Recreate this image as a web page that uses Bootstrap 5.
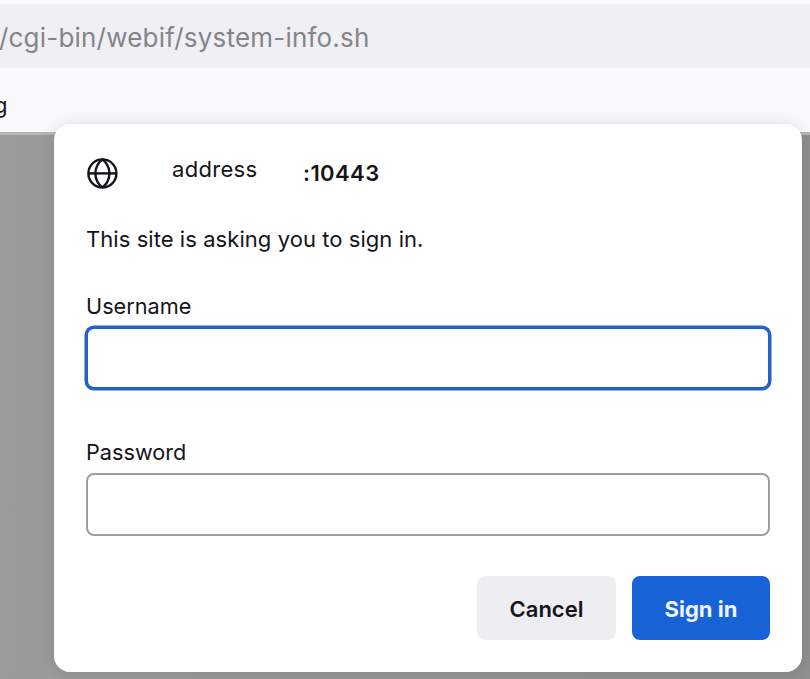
<!DOCTYPE html>
<html lang="en">
<head>
    <meta charset="UTF-8">
    <title>Sign in</title>
    <meta name="viewport" content="width=device-width, initial-scale=1">
    <link href="https://cdn.jsdelivr.net/npm/bootstrap@5.3.3/dist/css/bootstrap.min.css" rel="stylesheet">
    <style>
        html, body {
            height: 100%;
        }

        body {
            background-color: #f9f9fb;
            font-family: Inter, "Liberation Sans", sans-serif;
            color: #15141a;
            overflow: hidden;
        }

        .browser-chrome {
            height: 135px;
            padding-top: 4px;
            background: #f9f9fb;
            border-bottom: 3px solid #b5b5b7;
        }

        .url-bar {
            height: 64px;
            background: #f0f0f4;
            color: #84848c;
            font-size: 26px;
            letter-spacing: .2px;
            margin-left: -1px;
            padding-top: 3px;
        }

        .bookmark-bar {
            height: 64px;
            font-size: 22px;
            margin-left: -6px;
            padding-top: 21px;
        }

        .page-backdrop {
            height: 544px;
            background: linear-gradient(to right, #9b9b9b, #8f8f8f);
        }

        .auth-dialog {
            position: absolute;
            left: 54px;
            top: 124px;
            width: 748px;
            height: 548px;
            padding: 32px;
            background: #fff;
            border-radius: 16px;
            box-shadow: 0 0 14px rgba(0, 0, 0, .12);
        }

        .site-row {
            height: 34px;
            font-size: 22px;
        }

        .site-icon {
            width: 32px;
            height: 32px;
        }

        .site-name {
            width: 131px;
            margin-left: 54px;
            margin-top: -7px;
            letter-spacing: .3px;
        }

        .site-port {
            font-weight: 600;
            letter-spacing: .4px;
        }

        .auth-text {
            font-size: 22px;
            line-height: 28px;
            letter-spacing: .06px;
            margin: 35px 0 0;
        }

        .field-label {
            display: block;
            font-size: 21.7px;
            line-height: 28px;
            margin: 0;
        }

        .username-group {
            margin-top: 39px;
        }

        .password-group {
            margin-top: 49px;
        }

        .auth-field {
            height: 63px;
            margin-top: 7px;
            border: 2px solid #9e9e9e;
            border-radius: 8px;
            font-size: 20px;
        }

        .auth-field-active {
            height: 62px;
            border-color: #1f63c9;
            box-shadow: 0 0 0 1.5px #1f63c9;
        }

        .auth-dialog-actions {
            margin-top: 40px;
        }

        .auth-btn {
            height: 64px;
            border: 0;
            border-radius: 8px;
            padding-top: 8px;
            font-size: 22px;
            font-weight: 600;
        }

        .btn-cancel {
            width: 139px;
            background: #eeeef0;
            color: #15141a;
        }

        .btn-signin {
            width: 138px;
            background: #1763d6;
            color: #eef4ff;
            font-weight: 700;
        }

        .btn-cancel:hover {
            background: #e2e2e6;
            color: #15141a;
        }

        .btn-signin:hover {
            background: #0f55bd;
            color: #fff;
        }
    </style>
</head>
<body>

<div class="browser-chrome">
    <div class="url-bar d-flex align-items-center text-nowrap">/cgi-bin/webif/system-info.sh</div>
    <div class="bookmark-bar text-nowrap">g</div>
</div>
<div class="page-backdrop"></div>

<div class="auth-dialog">
    <div class="site-row d-flex align-items-center">
        <svg class="site-icon flex-shrink-0" viewBox="0 0 32 32" fill="none" stroke="#15141a" stroke-width="2.4">
            <circle cx="16.4" cy="16.4" r="14"/>
            <path d="M2.4 16.4h28"/>
            <path d="M16.4 2.4c-4.6 3.7-7 8.4-7 14s2.4 10.3 7 14c4.6-3.7 7-8.4 7-14s-2.4-10.3-7-14z"/>
        </svg>
        <span class="site-name">address</span>
        <span class="site-port">:10443</span>
    </div>

    <p class="auth-text">This site is asking you to sign in.</p>

    <form>
        <div class="username-group">
            <label class="field-label" for="username">Username</label>
            <input type="text" class="form-control auth-field auth-field-active" id="username">
        </div>
        <div class="password-group">
            <label class="field-label" for="password">Password</label>
            <input type="password" class="form-control auth-field" id="password">
        </div>
        <div class="auth-dialog-actions d-flex justify-content-end gap-3">
            <button type="button" class="btn auth-btn btn-cancel">Cancel</button>
            <button type="submit" class="btn auth-btn btn-signin">Sign in</button>
        </div>
    </form>
</div>

</body>
</html>
